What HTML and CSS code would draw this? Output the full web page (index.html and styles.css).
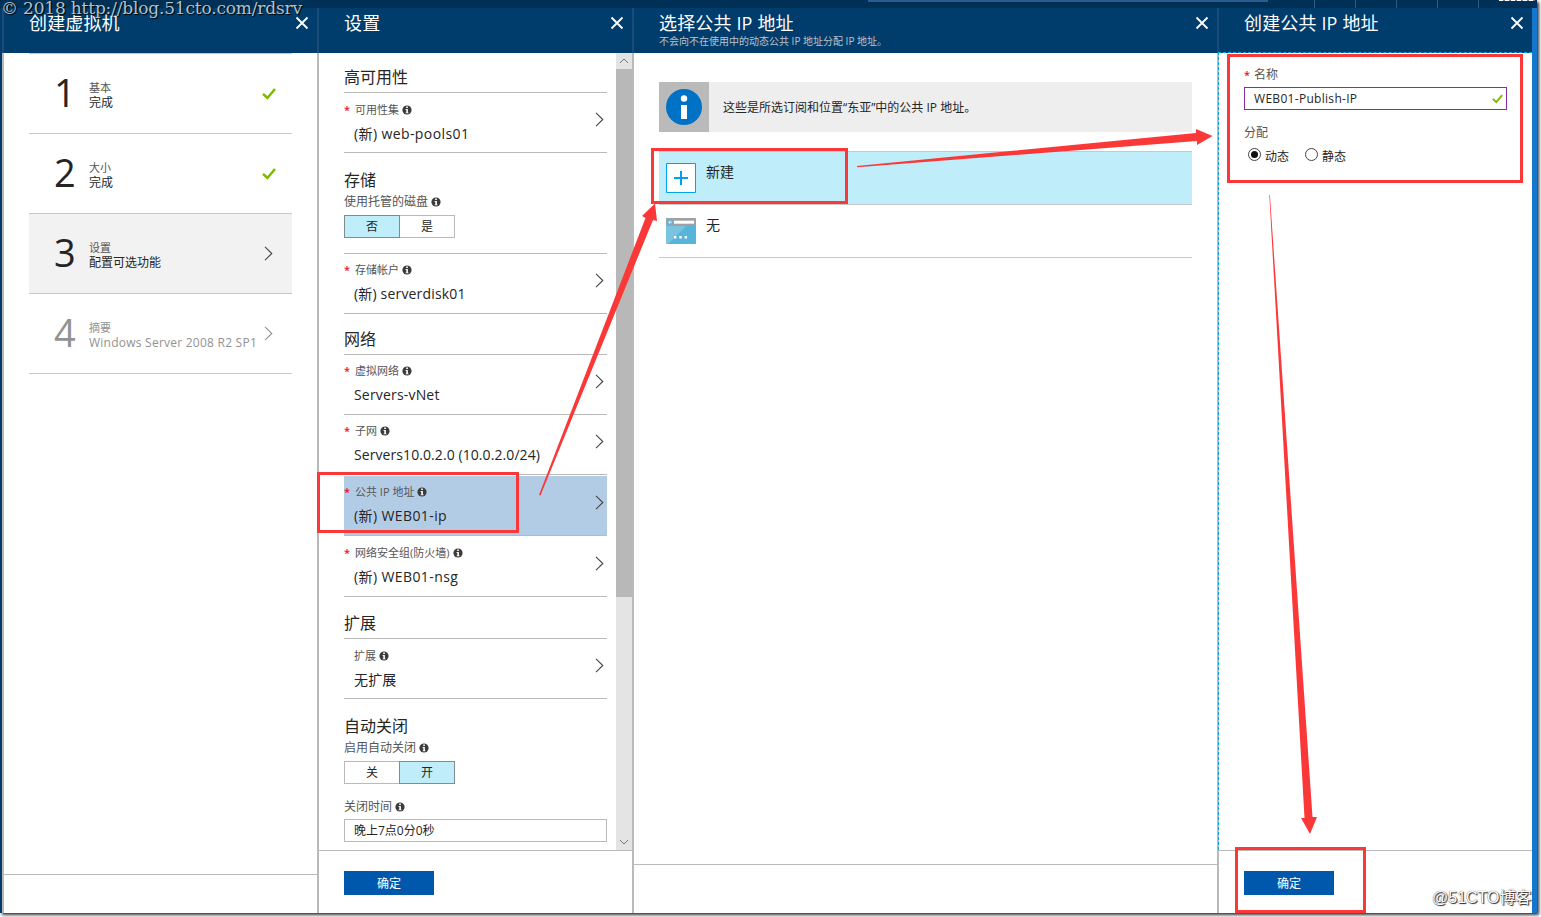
FILE: index.html
```html
<!DOCTYPE html>
<html lang="zh-CN">
<head>
    <meta charset="UTF-8">
    <title>创建虚拟机</title>
    <link rel="stylesheet" href="styles.css">
</head>
<body>
    <!-- Shared icons -->
    <svg class="sprite">
        <symbol id="close" viewBox="0 0 14 14"><path d="M1.5 1.5L12.5 12.5M12.5 1.5L1.5 12.5" fill="none" stroke="#fff" stroke-width="1.8"/></symbol>
        <symbol id="chevron" viewBox="0 0 9 15"><path d="M1 .8L7.8 7.5L1 14.2" fill="none" stroke="currentColor" stroke-width="1.1"/></symbol>
        <symbol id="check" viewBox="0 0 14 12"><path d="M1 5.8L5.4 10L13 1" fill="none" stroke="#7fba00" stroke-width="2.5"/></symbol>
        <symbol id="info" viewBox="0 0 10 10"><circle cx="5" cy="5" r="4.6" fill="#3b3b3b"/><path d="M4.2 1.5h1.7v1.5H4.2zM3.6 4h2.3v3.4h.7v.9H3.6v-.9h.7V4.9h-.7z" fill="#fff"/></symbol>
    </svg>

    <div class="portal">
        <div class="topbar">
            <div class="search"></div>
            <div class="tools"><i></i><i></i><i></i><i></i><i></i></div>
            <div class="account"></div>
        </div>

        <main>
            <section class="blade create">
                <header><h1>创建虚拟机</h1><svg class="close"><use href="#close"/></svg></header>
                <div class="content">
                    <ul class="steps">
                        <li><b>1</b><div><small>基本</small><span>完成</span></div><svg class="check"><use href="#check"/></svg></li>
                        <li><b>2</b><div><small>大小</small><span>完成</span></div><svg class="check"><use href="#check"/></svg></li>
                        <li class="active"><b>3</b><div><small>设置</small><span>配置可选功能</span></div><svg class="chevron"><use href="#chevron"/></svg></li>
                        <li class="disabled"><b>4</b><div><small>摘要</small><span class="os">Windows Server 2008 R2 SP1</span></div><svg class="chevron"><use href="#chevron"/></svg></li>
                    </ul>
                </div>
                <footer class="short"></footer>
            </section>

            <section class="blade settings">
                <header><h1>设置</h1><svg class="close"><use href="#close"/></svg></header>
                <div class="content scroll">
                    <div class="form">
                        <h2>高可用性</h2>
                        <div class="row first lower">
                            <div class="label"><em>*</em>可用性集<svg class="info"><use href="#info"/></svg></div>
                            <div class="value wide">(新) web-pools01</div>
                            <svg class="chevron"><use href="#chevron"/></svg>
                        </div>

                        <h2 class="plain">存储</h2>
                        <div class="caption">使用托管的磁盘<svg class="info"><use href="#info"/></svg></div>
                        <div class="toggle"><span class="on">否</span><span>是</span></div>
                        <div class="row first storage">
                            <div class="label"><em>*</em>存储帐户<svg class="info"><use href="#info"/></svg></div>
                            <div class="value">(新) serverdisk01</div>
                            <svg class="chevron"><use href="#chevron"/></svg>
                        </div>

                        <h2 class="network">网络</h2>
                        <div class="row first">
                            <div class="label"><em>*</em>虚拟网络<svg class="info"><use href="#info"/></svg></div>
                            <div class="value">Servers-vNet</div>
                            <svg class="chevron"><use href="#chevron"/></svg>
                        </div>
                        <div class="row">
                            <div class="label"><em>*</em>子网<svg class="info"><use href="#info"/></svg></div>
                            <div class="value tight">Servers10.0.2.0 (10.0.2.0/24)</div>
                            <svg class="chevron"><use href="#chevron"/></svg>
                        </div>
                        <div class="row selected">
                            <div class="label"><em>*</em>公共 IP 地址<svg class="info"><use href="#info"/></svg></div>
                            <div class="value wide">(新) WEB01-ip</div>
                            <svg class="chevron"><use href="#chevron"/></svg>
                        </div>
                        <div class="row">
                            <div class="label"><em>*</em>网络安全组(防火墙)<svg class="info"><use href="#info"/></svg></div>
                            <div class="value wide">(新) WEB01-nsg</div>
                            <svg class="chevron"><use href="#chevron"/></svg>
                        </div>

                        <h2 class="extensions">扩展</h2>
                        <div class="row first lower">
                            <div class="label optional">扩展<svg class="info"><use href="#info"/></svg></div>
                            <div class="value">无扩展</div>
                            <svg class="chevron"><use href="#chevron"/></svg>
                        </div>

                        <h2 class="plain">自动关闭</h2>
                        <div class="caption">启用自动关闭<svg class="info"><use href="#info"/></svg></div>
                        <div class="toggle"><span>关</span><span class="on">开</span></div>
                        <div class="caption time">关闭时间<svg class="info"><use href="#info"/></svg></div>
                        <div class="textbox">晚上7点0分0秒</div>
                    </div>
                    <div class="scrollbar">
                        <svg viewBox="0 0 16 16"><path d="M4 10L8 6L12 10" fill="none" stroke="#777"/></svg>
                        <div class="thumb"></div>
                        <svg class="down" viewBox="0 0 16 16"><path d="M4 6L8 10L12 6" fill="none" stroke="#777"/></svg>
                    </div>
                </div>
                <footer><button>确定</button></footer>
            </section>

            <section class="blade choose">
                <header><h1>选择公共 IP 地址</h1><p>不会向不在使用中的动态公共 IP 地址分配 IP 地址。</p><svg class="close"><use href="#close"/></svg></header>
                <div class="content">
                    <div class="notice">
                        <div class="notice-icon">
                            <svg viewBox="0 0 36 36"><circle cx="18" cy="18" r="18" fill="#0072c6"/><circle cx="18" cy="9.5" r="3.2" fill="#fff"/><path d="M15 16h6v14h-6z" fill="#fff"/></svg>
                        </div>
                        <span>这些是所选订阅和位置“东亚”中的公共 IP 地址。</span>
                    </div>
                    <ul class="options">
                        <li class="new">
                            <svg viewBox="0 0 30 30"><path d="M.5 .5h29v29H.5z" fill="#fff" stroke="#00a1f1"/><path d="M15 8v14M8 15h14" stroke="#00a1f1" stroke-width="2"/></svg>
                            <span>新建</span>
                        </li>
                        <li>
                            <svg viewBox="0 0 30 30"><path d="M0 2h30v26H0z" fill="#59b4d9"/><path d="M0 10h20L2 28H0z" fill="#7ac3e1"/><path d="M0 3q0-1 1-1h28q1 0 1 1v7H0z" fill="#a0a1a2"/><path d="M8 4.7h20v3H8z" fill="#fff"/><circle cx="4.1" cy="6.2" r="2.7" fill="#59b4d9"/><path d="M6 6.2H2.7M4.2 4.6L2.6 6.2l1.6 1.6" fill="none" stroke="#fff" stroke-width=".8"/><path d="M8 20h2.4v2.4H8zM13.3 20h2.4v2.4h-2.4zM18.6 20H21v2.4h-2.4z" fill="#fff"/></svg>
                            <span>无</span>
                        </li>
                    </ul>
                </div>
                <footer class="medium"></footer>
            </section>

            <section class="blade address">
                <header><h1>创建公共 IP 地址</h1><svg class="close"><use href="#close"/></svg></header>
                <div class="content">
                    <div class="caption name"><em>*</em>名称</div>
                    <div class="textbox valid"><span>WEB01-Publish-IP</span><svg class="check"><use href="#check"/></svg></div>
                    <div class="caption assign">分配</div>
                    <div class="radios">
                        <span class="radio checked"></span>动态
                        <span class="radio"></span>静态
                    </div>
                </div>
                <footer><button>确定</button></footer>
            </section>
        </main>
    </div>

    <!-- Walkthrough marks drawn over the portal -->
    <svg class="marks" viewBox="0 0 1541 917">
        <g fill="none" stroke="#fb3838" stroke-width="3">
            <rect x="318.5" y="473.5" width="199" height="58"/>
            <rect x="652.5" y="149.5" width="194" height="53"/>
            <rect x="1228.5" y="55.5" width="293" height="126"/>
            <rect x="1236.5" y="848.5" width="128" height="63"/>
        </g>
        <g fill="#fb3838">
            <path d="M539 495L645.5 218L642 216L655 203.500L657 221L653 220L540.500 495.500Z"/>
            <path d="M857 166L1196 133L1196 129L1212.500 136L1197 145L1197 141L857 167.200Z"/>
            <path d="M1269.300 195L1304.500 818L1301 818L1310 834L1317 817L1312.500 817L1269.900 195Z"/>
        </g>
    </svg>
    <div class="source">© 2018 http://blog.51cto.com/rdsrv</div>
    <div class="credit">@51CTO博客</div>
</body>
</html>
```
FILE: styles.css
```css
/* General */
* {
    box-sizing: border-box;
}

body {
    margin: 0;
    width: 1541px;
    height: 917px;
    overflow: hidden;
    background: #fff;
    color: #252525;
    font-family: "Open Sans", "Noto Sans CJK SC", sans-serif;
    font-size: 12px;
}

h1, h2, p, ul {
    margin: 0;
    padding: 0;
    font-weight: normal;
    list-style: none;
}

svg {
    display: block;
    flex: none;
}

em {
    color: #e81123;
    font-style: normal;
    font-weight: 600;
}

.sprite {
    position: absolute;
    width: 0;
    height: 0;
}

.portal {
    display: flex;
    flex-direction: column;
    width: 1537px;
    height: 913px;
    background: #003c6c;
    box-shadow: 2px 2px 3px #333;
}

/* Top bar */
.topbar {
    display: flex;
    height: 8px;
    padding-left: 868px;
    background: #003056;
}

.search {
    width: 400px;
    height: 2px;
    background: #2b5c8e;
}

.tools {
    display: flex;
    gap: 40px;
    padding-left: 46px;
}

.tools i {
    width: 1px;
    background: #33597a;
}

.account {
    width: 36px;
    height: 1px;
    margin-left: 20px;
    background: repeating-linear-gradient(90deg, #fff 0 4px, #6b8299 4px 6px);
}

/* Blades */
main {
    display: flex;
    flex: 1;
    padding-left: 2px;
    border-right: 5px solid #1277cd;
}

.blade {
    display: flex;
    flex-direction: column;
    width: 315px;
    background: #fff;
    border-left: 2px solid #bababa;
}

.blade.choose {
    width: 585px;
}

.blade header {
    position: relative;
    height: 45px;
    margin-left: -2px;
    padding: 3px 0 0 25px;
    background: #003c6c;
    border-left: 2px solid #1b4b78;
    color: #fff;
}

h1 {
    height: 24px;
    font-size: 18px;
    letter-spacing: .15px;
    line-height: 25px;
}

header p {
    height: 12px;
    color: #b9c4ce;
    font-size: 10px;
    line-height: 12px;
}

.close {
    position: absolute;
    top: 8px;
    right: 8px;
    width: 14px;
    height: 14px;
}

.content {
    flex: 1;
    min-height: 0;
    padding: 0 25px;
}

footer {
    height: 63px;
    padding: 20px 25px 0;
    border-top: 1px solid #bababa;
}

footer.short {
    height: 39px;
}

footer.medium {
    height: 49px;
}

button {
    display: block;
    width: 90px;
    height: 24px;
    padding: 1px 0 0;
    background: #0058ad;
    border: 0;
    color: #fff;
    font: 12px/23px "Open Sans", "Noto Sans CJK SC", sans-serif;
}

/* Steps */
.steps {
    border-top: 1px solid #c8c8c8;
}

.steps li {
    display: flex;
    align-items: center;
    height: 80px;
    border-bottom: 1px solid #c8c8c8;
}

.steps b {
    width: 60px;
    padding: 0 0 3px 25px;
    font-size: 38px;
    font-weight: normal;
    line-height: 40px;
}

.steps div {
    flex: 1;
    padding-top: 3px;
}

.steps small,
.steps span {
    display: block;
    height: 15px;
    font-size: 11px;
    line-height: 15px;
    color: #555;
    white-space: nowrap;
}

.steps span {
    color: #252525;
    font-size: 12px;
}

.steps .os {
    letter-spacing: .24px;
}

.steps .active {
    background: #f2f2f2;
}

.steps .disabled b,
.steps .disabled small,
.steps .disabled span {
    color: #929292;
}

.steps .disabled svg {
    color: #929292;
}

.check {
    width: 14px;
    height: 12px;
}

.steps .check {
    margin-right: 16px;
}

.chevron {
    width: 9px;
    height: 15px;
    color: #444;
}

.steps .chevron {
    margin-right: 19px;
}

/* Settings form */
.scroll {
    display: flex;
    justify-content: space-between;
    padding-right: 0;
}

.form {
    width: 263px;
    overflow: hidden;
}

h2 {
    height: 39px;
    padding-top: 13px;
    font-size: 16px;
    line-height: 22px;
}

h2.network {
    height: 40px;
    padding-top: 14px;
}

h2.extensions {
    height: 41px;
    padding-top: 15px;
}

h2.plain {
    height: 41px;
    padding-top: 16px;
}

.row {
    position: relative;
    height: 60px;
    padding-top: 8px;
    border-bottom: 1px solid #bababa;
}

.row.first {
    height: 61px;
    border-top: 1px solid #bababa;
}

.row.lower {
    padding-top: 9px;
}

.row.storage {
    margin-top: 15px;
}

.row.selected {
    margin: 1px 0;
    background: #b3cce6;
}

.label,
.caption {
    display: flex;
    align-items: center;
    height: 16px;
    color: #555;
    font-size: 11px;
    line-height: 16px;
    white-space: nowrap;
}

.label em {
    width: 11px;
}

.label.optional {
    padding-left: 10px;
}

.caption {
    font-size: 12px;
}

.info {
    width: 10px;
    height: 10px;
    margin-left: 3px;
}

.value {
    height: 22px;
    margin-top: 5px;
    padding-left: 10px;
    font-size: 14px;
    letter-spacing: .18px;
    line-height: 22px;
    white-space: nowrap;
}

.value.wide {
    letter-spacing: .4px;
}

.value.tight {
    letter-spacing: .08px;
}

.row .chevron {
    position: absolute;
    top: 19px;
    right: 3px;
}

.toggle {
    display: flex;
    width: 111px;
    height: 23px;
    margin-top: 5px;
}

.toggle span {
    width: 56px;
    border: 1px solid #bababa;
    line-height: 21px;
    text-align: center;
}

.toggle span + span {
    margin-left: -1px;
}

.toggle .on {
    z-index: 1;
    background: #bfeefa;
    border-color: #7f8c90;
}

.caption.time {
    margin-top: 15px;
}

.textbox {
    display: flex;
    align-items: center;
    justify-content: space-between;
    height: 23px;
    margin-top: 4px;
    padding: 0 3px 1px 9px;
    border: 1px solid #bababa;
}

.scrollbar {
    width: 16px;
    background: #e4e4e4;
    display: flex;
    flex-direction: column;
}

.scrollbar svg {
    width: 16px;
    height: 16px;
}

.scrollbar .down {
    margin-top: auto;
}

.thumb {
    height: 528px;
    background: #b8b8b8;
}

/* Public IP list */
.notice {
    display: flex;
    align-items: center;
    height: 50px;
    margin-top: 29px;
    background: #eee;
}

.notice-icon {
    width: 50px;
    height: 50px;
    margin-right: 14px;
    padding: 7px;
    background: #bababa;
}

.options {
    margin-top: 19px;
    border-top: 1px solid #c8c8c8;
}

.options li {
    display: flex;
    height: 53px;
    padding: 11px 7px 0;
    border-bottom: 1px solid #c8c8c8;
    font-size: 14px;
    line-height: 18px;
}

.options svg {
    width: 30px;
    height: 30px;
    margin-right: 10px;
}

.options .new {
    background: #bfeefa;
}

/* New address form */
.address .content {
    position: relative;
    margin: -1px 0 0 -1px;
    padding-top: 14px;
    border: 1px dashed #00abec;
    border-width: 1px 0 0 1px;
}

.name em {
    width: 10px;
    font-size: 11px;
}

.textbox.valid {
    border-color: #8a2da5;
    letter-spacing: .3px;
}

.textbox .check {
    width: 11px;
    height: 10px;
    margin-top: 2px;
}

.assign {
    margin-top: 15px;
}

.radios {
    display: flex;
    align-items: center;
    height: 18px;
    margin-top: 6px;
    padding-left: 4px;
}

.radio {
    width: 13px;
    height: 13px;
    margin: -3px 4px 0 0;
    padding: 2px;
    border: 1px solid #444;
    border-radius: 50%;
}

.radio + .radio {
    margin-left: 16px;
}

.radio.checked {
    background: #111 content-box;
}

/* Marks and credits */
.marks {
    position: absolute;
    top: 0;
    left: 0;
    width: 1541px;
    height: 917px;
}

.source {
    position: absolute;
    top: -3px;
    left: 1px;
    color: #b4c0cb;
    font: 17px/22px "DejaVu Serif", serif;
    letter-spacing: -.18px;
    text-shadow: 1px 1px 1px #000;
    white-space: nowrap;
}

.credit {
    position: absolute;
    top: 888px;
    left: 1432px;
    color: #fff;
    font: 16px/20px "Liberation Sans", "Noto Sans CJK SC", sans-serif;
    text-shadow: 1px 1px 1px #222, 0 0 1px #333;
    white-space: nowrap;
}
```
